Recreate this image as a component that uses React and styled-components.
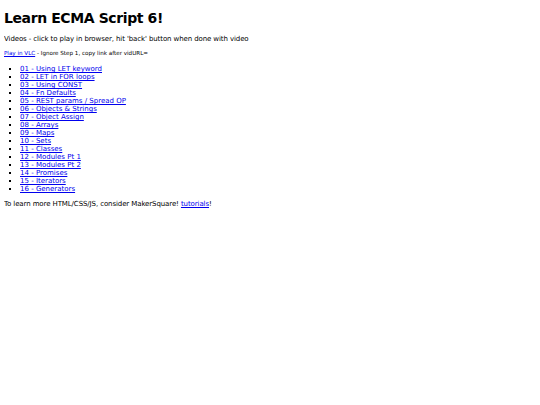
import React from "react";
import styled, { createGlobalStyle } from "styled-components";

const GlobalStyle = createGlobalStyle`
  body {
    margin: 4px;
    background: #ffffff;
    color: #000000;
    font-family: "DejaVu Sans", Verdana, sans-serif;
    font-size: 7px;
  }
`;

const Title = styled.h1`
  font-size: 14px;
  font-weight: bold;
  letter-spacing: -0.4px;
  margin: 6px 0 9px;
`;

const Intro = styled.p`
  margin: 7px 0;
  letter-spacing: -0.1px;
`;

const Note = styled.p`
  margin: 7px 0 9px;
  font-size: 5.6px;
`;

const Link = styled.a`
  color: #0000ee;
  text-decoration: underline;
`;

const VideoList = styled.ul`
  margin: 7px 0;
  padding-left: 16px;
  list-style: square;
`;

const Item = styled.li`
  line-height: 8px;
`;

const videos = [
  "01 - Using LET keyword",
  "02 - LET in FOR loops",
  "03 - Using CONST",
  "04 - Fn Defaults",
  "05 - REST params / Spread OP",
  "06 - Objects & Strings",
  "07 - Object Assign",
  "08 - Arrays",
  "09 - Maps",
  "10 - Sets",
  "11 - Classes",
  "12 - Modules Pt 1",
  "13 - Modules Pt 2",
  "14 - Promises",
  "15 - Iterators",
  "16 - Generators",
];

const App = () => {
  return (
    <>
      <GlobalStyle />
      <Title>Learn ECMA Script 6!</Title>
      <Intro>
        Videos - click to play in browser, hit 'back' button when done with video
      </Intro>
      <Note>
        <Link href="#">Play in VLC</Link> - Ignore Step 1, copy link after vidURL=
      </Note>
      <VideoList>
        {videos.map((v) => (
          <Item key={v}>
            <Link href="#">{v}</Link>
          </Item>
        ))}
      </VideoList>
      <Intro>
        To learn more HTML/CSS/JS, consider MakerSquare!{" "}
        <Link href="#">tutorials</Link>!
      </Intro>
    </>
  );
};

export default App;
